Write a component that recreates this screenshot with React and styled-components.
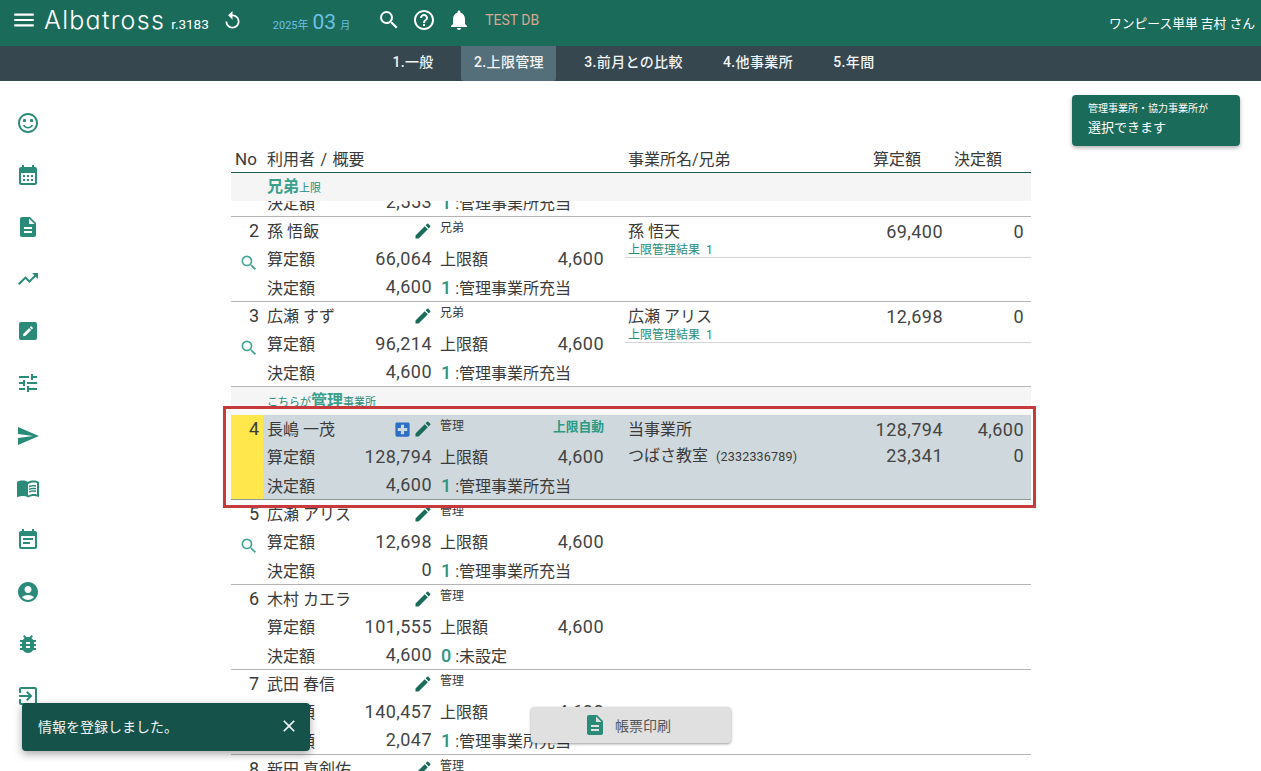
import React from "react";
import styled, { createGlobalStyle } from "styled-components";
import {
  MdMenu, MdReplay, MdSearch, MdHelpOutline, MdNotifications, MdSentimentSatisfiedAlt,
  MdCalendarMonth, MdDescription, MdTrendingUp, MdTune, MdSend, MdMenuBook,
  MdEventNote, MdAccountCircle, MdBugReport, MdOutlineExitToApp, MdEdit, MdLocalHospital, MdClose,
} from "react-icons/md";

const FONT = `Roboto, "Noto Sans CJK JP", sans-serif`;

const Global = createGlobalStyle`
  html, body { margin: 0; padding: 0; height: 100%; overflow: hidden; background: #fff; }
  body { font-family: ${FONT}; color: #3a3a3a; }
  * { box-sizing: border-box; }
`;

const Page = styled.div`
  position: relative;
  height: 771px;
  overflow: hidden;
`;

const Header = styled.header`
  height: 46px;
  background: #1b6b5a;
  color: #fff;
  display: flex;
  align-items: center;
  padding: 0 6px 6px 11px;
`;
const LogoText = styled.span`
  font-family: Inter, sans-serif;
  font-feature-settings: "cv11";
  font-weight: 300;
  font-size: 25px;
  letter-spacing: 1.3px;
  margin-left: 7px;
`;
const Revision = styled.span`
  font-size: 13.5px;
  margin: 8px 0 0 6px;
`;
const ReloadSlot = styled.span`
  display: flex;
  margin: 0 30px 0 13px;
`;
const DateBox = styled.span`
  display: flex;
  align-items: baseline;
  color: #6cc0e6;
  font-size: 11px;
  margin-top: 4px;
`;
const DateBig = styled.span`
  font-size: 21px;
  font-weight: 400;
  margin: 0 4px;
`;
const DateSmall = styled.span`
  font-size: 10px;
`;
const HeaderIcons = styled.span`
  display: flex;
  gap: 11px;
  margin-left: 27px;
  align-items: center;
`;
const TestDb = styled.span`
  color: #d6a78f;
  font-size: 14px;
  margin-left: 14px;
`;
const UserName = styled.span`
  margin-left: auto;
  font-size: 12.75px;
  margin-top: 5px;
`;

const TabBar = styled.nav`
  height: 35px;
  background: #37474f;
  display: flex;
  justify-content: center;
  gap: 15.3px;
  padding-left: 6px;
`;
const Tab = styled.div`
  padding: 0 12.5px 6px;
  display: flex;
  align-items: center;
  color: #f2f4f5;
  font-size: 14px;
  font-weight: 500;
  letter-spacing: 0.35px;
  border-radius: 0 0 3px 3px;
  background: ${(p) => (p.$active ? "#546e7a" : "transparent")};
`;

const Body = styled.div`
  display: flex;
  align-items: flex-start;
`;
const Sidebar = styled.aside`
  width: 231px;
  flex: none;
  padding: 30px 0 0 16px;
  display: flex;
  flex-direction: column;
  gap: 28.1px;
  color: #2a8b79;
  svg { display: block; }
`;
const ListArea = styled.main`
  width: 800px;
  flex: none;
  padding-top: 66px;
`;
const ListHead = styled.div`
  display: grid;
  grid-template-columns: 32px 362px 1fr 80px 81px;
  height: 26px;
  border-bottom: 1px solid #1b5c50;
  font-size: 16px;
  line-height: 25px;
`;
const HeadNo = styled.span`
  font-size: 17px;
  padding-left: 4px;
`;
const HeadText = styled.span`
  padding-left: ${(p) => p.$pl || 0}px;
  padding-right: ${(p) => p.$pr || 0}px;
  text-align: ${(p) => (p.$right ? "right" : "left")};
  white-space: nowrap;
  word-spacing: 1.5px;
`;

const Band = styled.div`
  height: 28px;
  background: #f5f5f5;
  padding-left: 36px;
  color: #2a8b79;
  font-size: 11px;
  line-height: 28px;
  white-space: nowrap;
`;
const BandStrong = styled.b`
  font-size: 16px;
  font-weight: 700;
  color: #3aa08c;
`;
const Clip = styled.div`
  height: 16px;
  overflow: hidden;
`;
const RowBox = styled.div`
  position: relative;
  display: grid;
  grid-template-columns: 32px 362px 1fr;
  height: 85px;
  margin-top: ${(p) => p.$offset || 0}px;
  border-bottom: 1px solid ${(p) => (p.$selected ? "#8b9c92" : "#b4b4b4")};
  background: ${(p) => (p.$selected ? "#cfd8dc" : "transparent")};
`;
const NoCell = styled.div`
  background: ${(p) => (p.$selected ? "#ffe74c" : "transparent")};
  display: flex;
  flex-direction: column;
  align-items: flex-end;
  padding-right: 4px;
`;
const NoLine = styled.div`
  height: 28px;
  font-size: 18px;
  line-height: 28px;
`;
const SearchSlot = styled.div`
  height: 28px;
  display: flex;
  align-items: center;
  padding-top: 8px;
  color: #45a595;
`;
const Summary = styled.div`
  padding-left: 4px;
`;
const SummaryLine = styled.div`
  display: grid;
  grid-template-columns: 165px 164px;
  column-gap: 8px;
  height: 28px;
  padding-top: 1px;
  line-height: 28px;
  font-size: 16px;
  white-space: nowrap;
`;
const Pair = styled.div`
  display: flex;
  justify-content: space-between;
  align-items: center;
`;
const Num = styled.span`
  font-size: 18px;
  letter-spacing: 0.45px;
  line-height: 28px;
  color: #444;
`;
const Amount = styled(Num)`
  line-height: 26px;
  align-self: flex-start;
`;
const Tools = styled.span`
  display: flex;
  align-items: center;
  gap: 1px;
  margin: -2px -1px 0 0;
  color: #1b6b5a;
`;
const Kind = styled.span`
  font-size: 12px;
  line-height: 21px;
`;
const Auto = styled.span`
  font-size: 12.75px;
  font-weight: 700;
  line-height: 21px;
  color: #2a9a83;
`;
const KindLine = styled.div`
  display: flex;
  justify-content: space-between;
  align-items: flex-start;
`;
const Code = styled.b`
  font-size: 18px;
  font-weight: 500;
  color: #2f9583;
  margin: 0 4px 0 1px;
`;
const Offices = styled.div``;
const Sibling = styled.div`
  height: 41px;
  padding-top: 1px;
  border-bottom: 1px solid #d4d4d4;
`;
const OfficeLine = styled.div`
  display: grid;
  grid-template-columns: 1fr 81px;
  height: ${(p) => p.$h}px;
  line-height: ${(p) => p.$h}px;
  font-size: 16px;
  padding-left: 3px;
  padding-right: 7px;
  white-space: nowrap;
`;
const OfficeTop = styled.div`
  padding-top: 2px;
`;
const OfficeNameCell = styled.div`
  display: flex;
  justify-content: space-between;
`;
const RightNum = styled(Num)`
  line-height: inherit;
  text-align: right;
`;
const OfficeCode = styled.span`
  font-size: 12.5px;
  letter-spacing: 0.2px;
  margin-left: 8px;
`;
const SubLabel = styled.div`
  font-size: 12px;
  line-height: 12px;
  height: 12px;
  margin-top: -2px;
  padding-left: 3px;
  color: #2a8b79;
`;
const Annotation = styled.div`
  position: absolute;
  top: -9px;
  left: -8px;
  right: -5px;
  bottom: -9px;
  border: 3px solid #c6393d;
  z-index: 2;
  pointer-events: none;
  &::after {
    content: "";
    position: absolute;
    inset: 0;
    border-style: solid;
    border-color: #fafafa;
    border-width: 5.5px 0 5.5px 5px;
  }
`;

const Aside = styled.aside`
  padding: 14px 0 0 41px;
`;
const Callout = styled.div`
  width: 168px;
  height: 51px;
  background: #1b6b5a;
  border-radius: 4px;
  color: #fff;
  padding: 6px 16px;
  box-shadow: 0 2px 4px rgba(0, 0, 0, 0.3);
`;
const CalloutSmall = styled.div`
  font-size: 10px;
  line-height: 15px;
  white-space: nowrap;
`;
const CalloutBig = styled.div`
  font-size: 13px;
  line-height: 24px;
`;

const Toast = styled.div`
  position: absolute;
  left: 22px;
  top: 703px;
  width: 288px;
  height: 48px;
  background: #14524a;
  color: #f0f5f4;
  border-radius: 4px;
  display: flex;
  align-items: center;
  justify-content: space-between;
  padding: 0 11px 2px 16px;
  font-size: 14px;
  box-shadow: 0 3px 8px rgba(0, 0, 0, 0.35);
  z-index: 3;
`;
const PrintButton = styled.div`
  position: absolute;
  left: 531px;
  top: 707px;
  width: 200px;
  height: 36px;
  background: #e0e0e0;
  border-radius: 4px;
  display: flex;
  align-items: center;
  justify-content: center;
  gap: 8px;
  padding: 0 8px 1px 0;
  color: #555;
  font-size: 14px;
  box-shadow: 0 1px 3px rgba(0, 0, 0, 0.4);
  z-index: 3;
  svg { color: #2a8b79; }
`;

const EditFilled = ({ size }) => (
  <svg width={size} height={size} viewBox="0 0 24 24" aria-hidden="true">
    <path fill="currentColor" d="M5 3h14a2 2 0 0 1 2 2v14a2 2 0 0 1-2 2H5a2 2 0 0 1-2-2V5a2 2 0 0 1 2-2z" />
    <g transform="translate(5.6 5.6) scale(0.54)">
      <path fill="#fff" d="M3 17.25V21h3.75L17.81 9.94l-3.75-3.75L3 17.25zM20.71 7.04c.39-.39.39-1.02 0-1.41l-2.34-2.34c-.39-.39-1.02-.39-1.41 0l-1.83 1.83 3.75 3.75 1.83-1.83z" />
    </g>
  </svg>
);

const sideIcons = [
  MdSentimentSatisfiedAlt, MdCalendarMonth, MdDescription, MdTrendingUp, EditFilled, MdTune,
  MdSend, MdMenuBook, MdEventNote, MdAccountCircle, MdBugReport, MdOutlineExitToApp,
];
const tabs = ["1.一般", "2.上限管理", "3.前月との比較", "4.他事業所", "5.年間"];

function Row({ r, offset }) {
  const sel = r.selected;
  return (
    <RowBox $selected={sel} $offset={offset}>
      <NoCell $selected={sel}>
        <NoLine>{r.no}</NoLine>
        {r.search ? <SearchSlot><MdSearch size={20} /></SearchSlot> : null}
      </NoCell>
      <Summary>
        <SummaryLine>
          <Pair>
            <span>{r.name}</span>
            <Tools>
              {sel ? <MdLocalHospital size={19} color="#2b6fc4" /> : null}
              <MdEdit size={20} />
            </Tools>
          </Pair>
          <KindLine>
            <Kind>{r.kind}</Kind>
            {sel ? <Auto>上限自動</Auto> : null}
          </KindLine>
        </SummaryLine>
        <SummaryLine>
          <Pair><span>算定額</span><Amount>{r.calc}</Amount></Pair>
          <Pair><span>上限額</span><Amount>4,600</Amount></Pair>
        </SummaryLine>
        <SummaryLine>
          <Pair><span>決定額</span><Amount>{r.fixed}</Amount></Pair>
          <div><Code>{r.code}</Code>:{r.note}</div>
        </SummaryLine>
      </Summary>
      <Offices>
        {r.sibling ? (
          <Sibling>
            <OfficeLine $h={28}>
              <OfficeNameCell><span>{r.sibling[0]}</span><RightNum>{r.sibling[1]}</RightNum></OfficeNameCell>
              <RightNum>0</RightNum>
            </OfficeLine>
            <SubLabel>上限管理結果&nbsp;&nbsp;1</SubLabel>
          </Sibling>
        ) : null}
        {sel ? (
          <OfficeTop>
            <OfficeLine $h={26}>
              <OfficeNameCell><span>当事業所</span><RightNum>128,794</RightNum></OfficeNameCell>
              <RightNum>4,600</RightNum>
            </OfficeLine>
            <OfficeLine $h={26}>
              <OfficeNameCell>
                <span>つばさ教室<OfficeCode>(2332336789)</OfficeCode></span>
                <RightNum>23,341</RightNum>
              </OfficeNameCell>
              <RightNum>0</RightNum>
            </OfficeLine>
          </OfficeTop>
        ) : null}
      </Offices>
      {sel ? <Annotation /> : null}
    </RowBox>
  );
}

const NOTE = "管理事業所充当";

export default function App() {
  return (
    <Page>
      <Global />
      <Header>
        <MdMenu size={26} />
        <LogoText>Albatross</LogoText>
        <Revision>r.3183</Revision>
        <ReloadSlot><MdReplay size={21} /></ReloadSlot>
        <DateBox>2025年<DateBig>03</DateBig><DateSmall>月</DateSmall></DateBox>
        <HeaderIcons>
          <MdSearch size={24} />
          <MdHelpOutline size={24} />
          <MdNotifications size={24} />
        </HeaderIcons>
        <TestDb>TEST DB</TestDb>
        <UserName>ワンピース単単 吉村 さん</UserName>
      </Header>
      <TabBar>
        {tabs.map((t, i) => <Tab key={t} $active={i === 1}>{t}</Tab>)}
      </TabBar>
      <Body>
        <Sidebar>
          {sideIcons.map((Icon, i) => <Icon key={i} size={24} />)}
        </Sidebar>
        <ListArea>
          <ListHead>
            <HeadNo>No</HeadNo>
            <HeadText $pl={4}>利用者 / 概要</HeadText>
            <HeadText $pl={3}>事業所名/兄弟</HeadText>
            <HeadText $right $pr={29}>算定額</HeadText>
            <HeadText $right $pr={29}>決定額</HeadText>
          </ListHead>
          <Band><BandStrong>兄弟</BandStrong>上限</Band>
          <Clip>
            <Row offset={-69} r={{ no: 1, name: "孫 悟空", kind: "兄弟", calc: "25,530", fixed: "2,553", code: 1, note: NOTE }} />
          </Clip>
          <Row r={{ no: 2, search: true, name: "孫 悟飯", kind: "兄弟", calc: "66,064", fixed: "4,600", code: 1, note: NOTE, sibling: ["孫 悟天", "69,400"] }} />
          <Row r={{ no: 3, search: true, name: "広瀬 すず", kind: "兄弟", calc: "96,214", fixed: "4,600", code: 1, note: NOTE, sibling: ["広瀬 アリス", "12,698"] }} />
          <Band>こちらが<BandStrong>管理</BandStrong>事業所</Band>
          <Row r={{ no: 4, selected: true, name: "長嶋 一茂", kind: "管理", calc: "128,794", fixed: "4,600", code: 1, note: NOTE }} />
          <Row r={{ no: 5, search: true, name: "広瀬 アリス", kind: "管理", calc: "12,698", fixed: "0", code: 1, note: NOTE }} />
          <Row r={{ no: 6, name: "木村 カエラ", kind: "管理", calc: "101,555", fixed: "4,600", code: 0, note: "未設定" }} />
          <Row r={{ no: 7, name: "武田 春信", kind: "管理", calc: "140,457", fixed: "2,047", code: 1, note: NOTE }} />
          <Row r={{ no: 8, name: "新田 真剣佑", kind: "管理", calc: "98,120", fixed: "4,600", code: 1, note: NOTE }} />
        </ListArea>
        <Aside>
          <Callout>
            <CalloutSmall>管理事業所・協力事業所が</CalloutSmall>
            <CalloutBig>選択できます</CalloutBig>
          </Callout>
        </Aside>
      </Body>
      <Toast>
        情報を登録しました。
        <MdClose size={20} />
      </Toast>
      <PrintButton>
        <MdDescription size={24} />
        帳票印刷
      </PrintButton>
    </Page>
  );
}
